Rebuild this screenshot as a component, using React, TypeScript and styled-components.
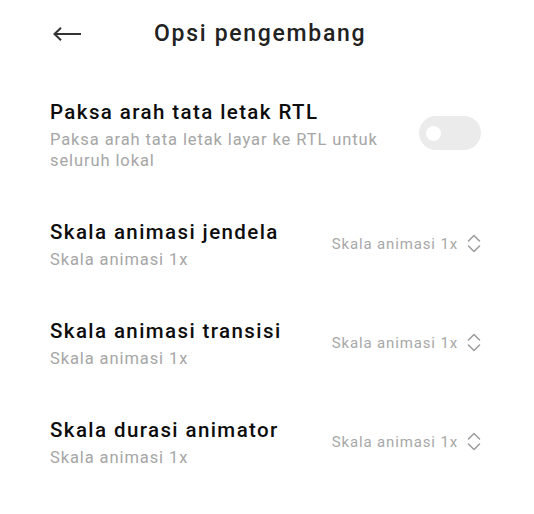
import React from "react";
import styled, { createGlobalStyle } from "styled-components";

const Global = createGlobalStyle`
  html, body { margin: 0; padding: 0; background: #ffffff; }
  body { font-family: Roboto, "Noto Sans", "Liberation Sans", sans-serif; -webkit-font-smoothing: antialiased; }
`;

const Page = styled.div`
  width: 534px;
  height: 514px;
  background: #ffffff;
  padding: 0 53px 0 50px;
  box-sizing: border-box;
`;

const Header = styled.header`
  height: 64px;
  display: flex;
  align-items: center;
  padding-left: 3px;
`;

const BackButton = styled.button`
  border: 0;
  background: none;
  padding: 0;
  margin-top: 4px;
  width: 28px;
  height: 14px;
  display: flex;
  cursor: pointer;
`;

const HeaderTitle = styled.h1`
  margin: 4px 0 0 73px;
  font-size: 23px;
  line-height: 30px;
  font-weight: 500;
  letter-spacing: 1.7px;
  color: #222222;
`;

const List = styled.div`
  padding-top: 11px;
  display: flex;
  flex-direction: column;
`;

const Row = styled.div<{ $align?: string }>`
  display: flex;
  align-items: ${(p) => p.$align || "center"};
  justify-content: space-between;
  padding: 24px 0;
  gap: 20px;
`;

const TextCol = styled.div`
  display: flex;
  flex-direction: column;
  gap: 4px;
  max-width: 345px;
`;

const Title = styled.div`
  font-size: 20.5px;
  line-height: 26px;
  font-weight: 500;
  letter-spacing: 1.4px;
  color: #0d0d0d;
  white-space: nowrap;
`;

const Subtitle = styled.div`
  font-size: 16.5px;
  line-height: 21px;
  letter-spacing: 0.9px;
  color: #a6a6a6;
`;

const Toggle = styled.div`
  width: 62px;
  height: 34px;
  border-radius: 17px;
  background: #ebebeb;
  margin-top: 17px;
  display: flex;
  align-items: center;
  flex-shrink: 0;
`;

const Knob = styled.div`
  width: 15px;
  height: 15px;
  border-radius: 50%;
  background: #ffffff;
  margin-left: 7px;
`;

const Value = styled.div`
  display: flex;
  align-items: center;
  gap: 9px;
  font-size: 15px;
  letter-spacing: 0.85px;
  color: #a8a8a8;
  flex-shrink: 0;
  margin-top: -2px;
`;

const BackArrow = () => (
  <svg width="28" height="14" viewBox="0 0 28 14" fill="none">
    <path d="M28 7H1.5M8 0.8L1.5 7L8 13.2" stroke="#333333" strokeWidth="2" strokeLinejoin="miter" />
  </svg>
);

const UpDown = () => (
  <svg width="14" height="21" viewBox="0 0 14 21" fill="none">
    <polyline points="1.5,8 7,2.5 12.5,8" stroke="#9e9e9e" strokeWidth="1.6" strokeLinecap="round" strokeLinejoin="round" />
    <polyline points="1.5,13 7,18.5 12.5,13" stroke="#9e9e9e" strokeWidth="1.6" strokeLinecap="round" strokeLinejoin="round" />
  </svg>
);

const scaleRows = [
  "Skala animasi jendela",
  "Skala animasi transisi",
  "Skala durasi animator",
];

export default function App() {
  return (
    <>
      <Global />
      <Page>
        <Header>
          <BackButton aria-label="Kembali">
            <BackArrow />
          </BackButton>
          <HeaderTitle>Opsi pengembang</HeaderTitle>
        </Header>
        <List>
          <Row $align="flex-start">
            <TextCol>
              <Title>Paksa arah tata letak RTL</Title>
              <Subtitle>Paksa arah tata letak layar ke RTL untuk seluruh lokal</Subtitle>
            </TextCol>
            <Toggle>
              <Knob />
            </Toggle>
          </Row>
          {scaleRows.map((t) => (
            <Row key={t}>
              <TextCol>
                <Title>{t}</Title>
                <Subtitle>Skala animasi 1x</Subtitle>
              </TextCol>
              <Value>
                Skala animasi 1x
                <UpDown />
              </Value>
            </Row>
          ))}
        </List>
      </Page>
    </>
  );
}
